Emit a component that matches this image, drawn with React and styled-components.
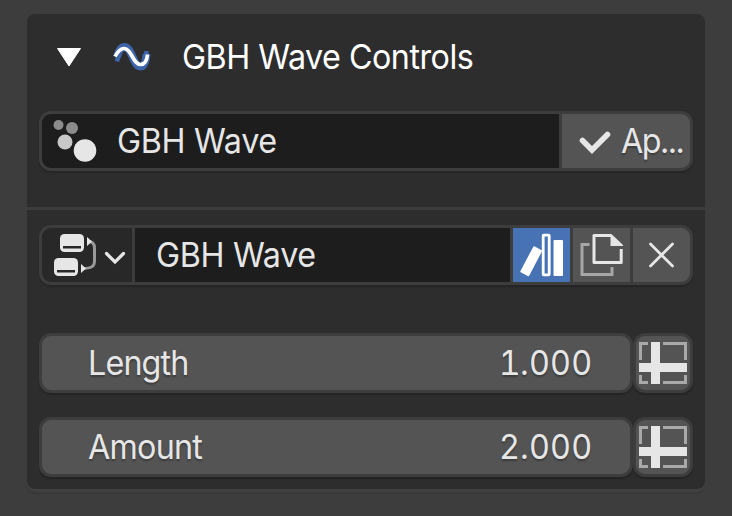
import React from "react";
import styled, { createGlobalStyle } from "styled-components";

const Global = createGlobalStyle`
  * { box-sizing: border-box; }
  body { margin: 0; background: #3d3d3d; overflow: hidden; }
`;

const Page = styled.main`
  width: 732px;
  height: 516px;
  padding: 14px 27px 0;
  background: #3d3d3d;
  font-family: Inter, sans-serif;
  font-size: 34px;
  font-weight: 400;
  color: #e6e6e6;
`;

const Panel = styled.section`
  width: 678px;
  height: 475px;
  border-radius: 8px;
  background: #2d2d2d;
  box-shadow: 0 3px 0 #404040, 0 5px 1px #383838;
`;

const Header = styled.header`
  display: flex;
  align-items: center;
  height: 86px;
  color: #fff;
`;

const Section = styled.div`
  display: flex;
  flex-direction: column;
  padding: ${(p) => p.$top}px 12px 0;
  height: ${(p) => p.$height}px;
  gap: 24px;
  border-top: ${(p) => (p.$ruled ? "3px solid #3d3d3d" : "0")};
`;

const Group = styled.div`
  display: flex;
  gap: 3px;
  width: 654px;
  height: 60px;
  flex: none;
  padding: 3px;
  margin-bottom: ${(p) => p.$after || 0}px;
  border-radius: 12px;
  background: #3d3d3d;
  box-shadow: 0 2px 1px #262626;
`;

const fills = { dark: "#1d1d1d", menu: "#282828", button: "#545454", active: "#4772b3" };

const Cell = styled.div`
  display: flex;
  align-items: center;
  flex: none;
  width: ${(p) => p.$width}px;
  height: 54px;
  overflow: hidden;
  background: ${(p) => fills[p.$tone]};
  border-radius: ${(p) => (p.$first ? "9px 0 0 9px" : p.$last ? "0 9px 9px 0" : "0")};
`;

const Label = styled.span`
  line-height: 54px;
  white-space: pre;
  margin-left: ${(p) => p.$indent || 0}px;
  letter-spacing: ${(p) => p.$track || 0}px;
  text-shadow: ${(p) => (p.$shadow ? "0 2px 2px rgba(0,0,0,.3)" : "none")};
  transform: scaleX(0.95);
  transform-origin: left;
`;

const Value = styled(Label)`
  position: relative;
  font-feature-settings: "tnum";
  transform-origin: right;

  /* serif foot under a leading "1" */
  &::before {
    content: "";
    display: ${(p) => (p.$foot ? "block" : "none")};
    position: absolute;
    left: 4px;
    top: 36.500px;
    width: 16px;
    height: 2.500px;
    background: #e6e6e6;
  }
`;

const PropertyRow = styled.div`
  display: flex;
  height: 60px;
  flex: none;
`;

const Field = styled.div`
  display: flex;
  justify-content: space-between;
  width: 594px;
  height: 60px;
  padding: 0 38px 0 46px;
  border: 3px solid #3d3d3d;
  border-radius: 12px;
  background: #545454;
  box-shadow: 0 2px 1px #242424;
`;

const AttributeButton = styled.button`
  width: 60px;
  height: 60px;
  padding: 0;
  border: 3px solid #3d3d3d;
  border-radius: 12px;
  background: #545454;
  box-shadow: 0 2px 1px #242424;
`;

const Icon = styled.svg`
  display: block;
  flex: none;
`;

const HeaderIcons = () => (
  <Icon width="155" height="86" viewBox="27 14 155 86">
    <path d="M57.500 48.500H80.500L69 66Z" fill="#fff" stroke="#fff" strokeWidth="1" strokeLinejoin="round" />
    <path d="M117 61.500C119 52 121 47 125 47C132 47 133 67 140.500 67C145 67 146 59 146.500 51" fill="none" stroke="#3e65a9" strokeWidth="4.500" />
    <path d="M117 57C118.500 51 121 47 124.500 47C132 47 133 66.500 140.500 66.500C145 66.500 146 60 146.500 54" fill="none" stroke="#3e65a9" strokeWidth="8" />
    <path d="M115 56.500C118 51 120.500 48.500 124 48.500C131.500 48.500 133 64.500 140.500 64.500C145 64.500 147 60 147.500 54.500" fill="none" stroke="#fff" strokeWidth="3.600" />
  </Icon>
);

const ParticlesIcon = () => (
  <Icon width="75" height="54" viewBox="42 114 75 54">
    <circle cx="58.500" cy="125" r="5" fill="#8c8c8c" />
    <circle cx="72" cy="128" r="6" fill="#8c8c8c" />
    <circle cx="65" cy="142" r="7.500" fill="#c8c8c8" />
    <circle cx="85" cy="150.500" r="11.300" fill="#e6e6e6" />
  </Icon>
);

const CheckIcon = () => (
  <Icon width="59" height="54" viewBox="562 114 59 54">
    <path d="M582.500 140.500L592 150L607.500 134.500" fill="none" stroke="#e6e6e6" strokeWidth="5.600" strokeLinecap="round" />
  </Icon>
);

const NodeTreeIcon = () => (
  <Icon width="90" height="54" viewBox="42 228 90 54">
    <path d="M88 241.500C93 241.500 94.500 244 94.500 248V261C94.500 266 92 268.500 82 268.500" fill="none" stroke="#999" strokeWidth="3" />
    <path d="M87 237V246L92 241.500ZM81 264V273L86 268.500Z" fill="#e6e6e6" />
    <rect x="60" y="234" width="24" height="18" rx="4.500" fill="#e6e6e6" />
    <rect x="54" y="258" width="24" height="18" rx="4.500" fill="#e6e6e6" />
    <path d="M63 247.300H81M57 271.300H75" stroke="#282828" strokeWidth="2.600" />
    <path d="M106.500 253.500L115 262L123.500 253.500" fill="none" stroke="#e6e6e6" strokeWidth="3.200" strokeLinecap="round" />
  </Icon>
);

const LibraryIcon = () => (
  <Icon width="57" height="54" viewBox="513 228 57 54">
    <path d="M534 247L541.300 251L528.500 275.500L521 271.500Z" fill="#fff" stroke="#fff" strokeWidth="1.500" strokeLinejoin="round" />
    <rect x="543.200" y="235.200" width="6" height="39.600" rx="0.500" fill="none" stroke="#fff" strokeWidth="2.800" />
    <rect x="553.500" y="240" width="9.500" height="36" rx="1" fill="#fff" />
  </Icon>
);

const DuplicateIcon = () => (
  <Icon width="57" height="54" viewBox="573 228 57 54">
    <path d="M589.500 244.500H582V274.500H612V267" fill="none" stroke="#a6a6a6" strokeWidth="3" />
    <path d="M611.500 235.500H594V262.500H621.200V249" fill="none" stroke="#e6e6e6" strokeWidth="3" strokeLinejoin="round" />
    <path d="M610.500 234.500H612L623 245V246H610.500Z" fill="#e6e6e6" />
  </Icon>
);

const CloseIcon = () => (
  <Icon width="57" height="54" viewBox="633 228 57 54">
    <path d="M650.500 244L672.500 266M672.500 244L650.500 266" stroke="#e6e6e6" strokeWidth="2.800" strokeLinecap="round" />
  </Icon>
);

const AttributeIcon = () => (
  <Icon width="54" height="54" viewBox="636 336 54 54">
    <path d="M648 343.500H640.500V360M663 343.500H685.500V360M640.500 375V382.500H648M663 382.500H685.500V375" fill="none" stroke="#a9a9a9" strokeWidth="3" />
    <path d="M651 342H660V363H687V372H660V384H651V372H639V363H651Z" fill="#e6e6e6" />
  </Icon>
);

const Property = ({ name, value, track }) => (
  <PropertyRow>
    <Field>
      <Label $shadow $track={track}>{name}</Label>
      <Value $shadow $track={0.2} $foot={value.startsWith("1")}>{value}</Value>
    </Field>
    <AttributeButton aria-label={`${name} attribute`}><AttributeIcon /></AttributeButton>
  </PropertyRow>
);

export default function App() {
  return (
    <>
      <Global />
      <Page>
        <Panel>
          <Header>
            <HeaderIcons />
            <Label $track={-0.55}>GBH Wave Controls</Label>
          </Header>
          <Section $top={11} $height={107}>
            <Group>
              <Cell $tone="dark" $width={517} $first>
                <ParticlesIcon />
                <Label $track={-0.35}>GBH Wave</Label>
              </Cell>
              <Cell $tone="button" $width={128} $last>
                <CheckIcon />
                <Label $shadow $track={-1.6}>Ap...</Label>
              </Cell>
            </Group>
          </Section>
          <Section $top={15} $height={282} $ruled>
            <Group $after={24}>
              <Cell $tone="menu" $width={90} $first><NodeTreeIcon /></Cell>
              <Cell $tone="dark" $width={375}><Label $indent={21} $track={-0.35}>GBH Wave</Label></Cell>
              <Cell $tone="active" $width={57}><LibraryIcon /></Cell>
              <Cell $tone="button" $width={57}><DuplicateIcon /></Cell>
              <Cell $tone="button" $width={57} $last><CloseIcon /></Cell>
            </Group>
            <Property name="Length" value="1.000" track={-0.9} />
            <Property name="Amount" value="2.000" track={-0.8} />
          </Section>
        </Panel>
      </Page>
    </>
  );
}
